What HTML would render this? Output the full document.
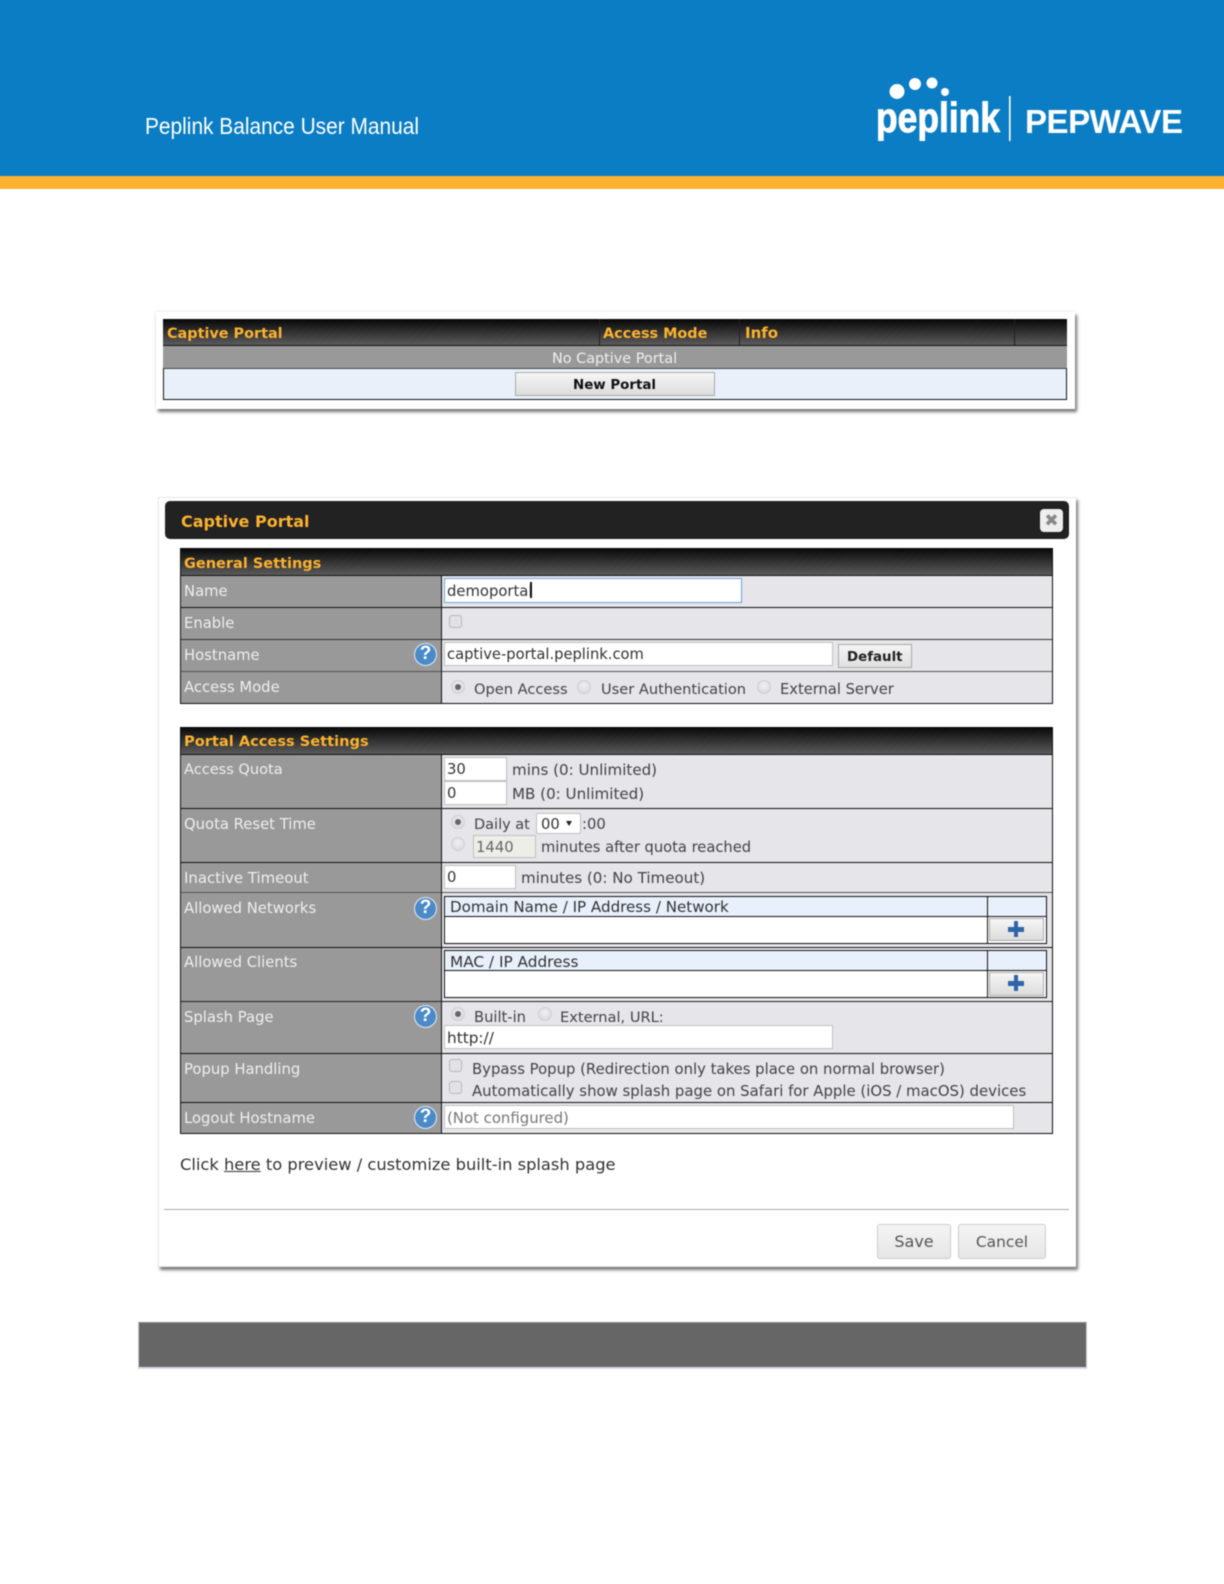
<!DOCTYPE html>
<html><head><meta charset="utf-8"><title>Peplink Balance User Manual</title>
<style>
html,body{margin:0;padding:0;background:#fff;width:1224px;height:1584px;overflow:hidden}
#p{position:relative;width:1224px;height:1584px;background:#fff;font-family:"DejaVu Sans","Liberation Sans",sans-serif;font-size:14.8px;color:#444;filter:blur(.4px)}
#p div,#p span.t{position:absolute;box-sizing:border-box}
.t{white-space:nowrap;line-height:20px;height:20px;margin-top:1px}
.v{font-size:15.1px}
.l{color:#efefef;left:184px}
.h{font-weight:bold;color:#fdb22d;font-size:14.4px}
.hd{background:repeating-linear-gradient(135deg,rgba(255,255,255,.05) 0 1px,rgba(0,0,0,.05) 1px 2px),linear-gradient(#000,#2a2a2a 45%,#5c5c5c)}
.lab{background:#999;left:180px;width:262px}
.val{background:#e5e5ea;left:442px;width:611px}
.ln{left:180px;width:873px;height:1px;background:#111}
.vl{width:1px;background:#111}
.in{background:#fff;border:1px solid #c0c0c0}
.ra{width:14px;height:14px;border-radius:50%;background:radial-gradient(circle at 50% 40%,#f0f0f2,#d4d4d8);border:1px solid #d0d0d4}
.ra.on::after{content:"";position:absolute;left:3px;top:3px;width:6px;height:6px;border-radius:50%;background:#666}
.ck{width:13px;height:13px;border-radius:3px;background:#e2e2e6;border:1px solid #b8b8bc}
.q{width:23px;height:23px;border-radius:50%;background:#4b8ac8;border:1.5px solid #e4ecf5;color:#fff;font:bold 19px/20px "Liberation Sans",sans-serif;text-align:center}
.bt{background:linear-gradient(#f6f6f6,#dcdcdc);border:1px solid #aaa}
.pl{background:#2e64a8}
.sub{background:#e8f0fb}
</style></head><body><div id="p">

<div style="left:-20px;top:-20px;width:1264px;height:196px;background:#0b7dc4"></div>
<div style="left:-20px;top:176px;width:1264px;height:13px;background:#fdb131"></div>
<svg style="position:absolute;left:0;top:0" width="1224" height="190">
<text x="145" y="134" fill="#fff" font-family="Liberation Sans" font-size="23" textLength="274" lengthAdjust="spacingAndGlyphs">Peplink Balance User Manual</text>
<circle cx="897" cy="91.5" r="7.5" fill="#fff"/><circle cx="915" cy="84" r="6" fill="#fff"/><circle cx="932" cy="83" r="5.5" fill="#fff"/><circle cx="945" cy="92" r="4" fill="#fff"/>
<text x="876" y="132" fill="#fff" stroke="#fff" stroke-width=".9" font-family="Liberation Sans" font-weight="bold" font-size="42" textLength="124" lengthAdjust="spacingAndGlyphs">peplink</text>
<rect x="1009" y="96" width="1.6" height="45" fill="#fff"/>
<text x="1025" y="133" fill="#fff" font-family="Liberation Sans" font-weight="bold" font-size="33" textLength="158" lengthAdjust="spacing">PEPWAVE</text>
</svg>

<!-- first card -->
<div style="left:156px;top:312px;width:919px;height:97px;background:#fff;box-shadow:2px 3px 3px #777,-1px -1px 3px #eee"></div>
<div class="hd" style="left:163px;top:319px;width:904px;height:27px"></div>
<div class="vl" style="left:599px;top:319px;height:27px;background:#222"></div>
<div class="vl" style="left:739px;top:319px;height:27px;background:#222"></div>
<div class="vl" style="left:1014px;top:319px;height:27px;background:#222"></div>
<div style="left:163px;top:345px;width:904px;height:1px;background:#111"></div>
<div style="left:163px;top:346px;width:904px;height:22px;background:#999"></div>
<div style="left:163px;top:368px;width:904px;height:32px;background:#e9f0fa;border:solid #111;border-width:1px;border-top-color:#444"></div>
<span class="t h" style="position:absolute;left:167px;top:323px">Captive Portal</span>
<span class="t h" style="position:absolute;left:603px;top:323px">Access Mode</span>
<span class="t h" style="position:absolute;left:745px;top:322px;font-size:15px">Info</span>
<span class="t" style="position:absolute;left:552px;top:348px;color:#f0f0f0;font-size:14.4px">No Captive Portal</span>
<div class="bt" style="left:515px;top:372px;width:200px;height:24px"></div>
<span class="t" style="position:absolute;left:573px;top:375px;font-weight:bold;color:#111;font-size:13.4px">New Portal</span>

<!-- dialog -->
<div style="left:158px;top:497px;width:918px;height:770px;background:#fff;border:1px solid #e8e8e8;border-right:0;box-shadow:2px 3px 3px #777"></div>
<div style="left:165px;top:501px;width:904px;height:38px;background:#222;border-radius:5px"></div>
<span class="t h" style="position:absolute;left:181px;top:511px;font-size:16px">Captive Portal</span>
<div style="left:1040px;top:509px;width:23px;height:23px;border-radius:4px;background:#eee"></div>
<span class="t" style="position:absolute;left:1040px;top:510px;width:23px;text-align:center;color:#888;font-weight:bold;font-size:17px">✖</span>

<!-- general -->
<div class="hd" style="left:180px;top:548px;width:873px;height:28px"></div>
<div class="lab" style="top:576px;height:127px"></div>
<div class="val" style="top:576px;height:127px"></div>
<div class="ln" style="top:575px"></div><div class="ln" style="top:607px"></div><div class="ln" style="top:639px;background:#333"></div><div class="ln" style="top:671px;background:#555"></div><div class="ln" style="top:703px"></div>
<div class="vl" style="left:180px;top:548px;height:156px"></div><div class="vl" style="left:441px;top:576px;height:127px"></div><div class="vl" style="left:1052px;top:548px;height:156px"></div>
<span class="t h" style="position:absolute;left:184px;top:553px;font-size:14.5px">General Settings</span>
<span class="t l" style="position:absolute;top:581px">Name</span>
<span class="t l" style="position:absolute;top:613px">Enable</span>
<span class="t l" style="position:absolute;top:645px">Hostname</span>
<span class="t l" style="position:absolute;top:677px">Access Mode</span>

<div class="in" style="left:444px;top:578px;width:298px;height:25px;border:1.5px solid #6fa3e0"></div>
<span class="t" style="position:absolute;left:447px;top:581px;color:#333">demoportal</span>
<div style="left:530px;top:582px;width:1.5px;height:16px;background:#111"></div>
<div class="ck" style="left:449px;top:615px"></div>
<div class="q" style="left:414px;top:643px">?</div>
<div class="in" style="left:444px;top:642px;width:389px;height:24px"></div>
<span class="t" style="position:absolute;left:447px;top:644px;color:#333;font-size:14.7px">captive-portal.peplink.com</span>
<div class="bt" style="left:838px;top:644px;width:74px;height:24px;background:linear-gradient(#f4f4f4,#e0e0e0)"></div>
<span class="t" style="position:absolute;left:847px;top:647px;font-weight:bold;color:#222;font-size:13.4px">Default</span>
<div class="ra on" style="left:451px;top:680px"></div>
<span class="t" style="position:absolute;left:474px;top:679px;font-size:14.6px">Open Access</span>
<div class="ra" style="left:577px;top:680px"></div>
<span class="t" style="position:absolute;left:601px;top:679px;font-size:14.6px">User Authentication</span>
<div class="ra" style="left:757px;top:680px"></div>
<span class="t" style="position:absolute;left:780px;top:679px;font-size:14.7px">External Server</span>

<!-- portal access -->
<div class="hd" style="left:180px;top:727px;width:873px;height:28px"></div>
<div class="lab" style="top:755px;height:378px"></div>
<div class="val" style="top:755px;height:378px"></div>
<div class="ln" style="top:754px"></div><div class="ln" style="top:808px"></div><div class="ln" style="top:862px"></div><div class="ln" style="top:892px;background:#555"></div><div class="ln" style="top:947px"></div><div class="ln" style="top:1001px;background:#222"></div><div class="ln" style="top:1053px"></div><div class="ln" style="top:1102px"></div><div class="ln" style="top:1133px"></div>
<div class="vl" style="left:180px;top:727px;height:407px"></div><div class="vl" style="left:441px;top:755px;height:378px"></div><div class="vl" style="left:1052px;top:727px;height:407px"></div>
<span class="t h" style="position:absolute;left:184px;top:731px;font-size:14.6px">Portal Access Settings</span>
<span class="t l" style="position:absolute;top:759px;font-size:14.55px">Access Quota</span>
<span class="t l" style="position:absolute;top:814px">Quota Reset Time</span>
<span class="t l" style="position:absolute;top:867px;font-size:14.9px">Inactive Timeout</span>
<span class="t l" style="position:absolute;top:898px">Allowed Networks</span>
<span class="t l" style="position:absolute;top:952px">Allowed Clients</span>
<span class="t l" style="position:absolute;top:1007px">Splash Page</span>
<span class="t l" style="position:absolute;top:1059px">Popup Handling</span>
<span class="t l" style="position:absolute;top:1108px">Logout Hostname</span>

<div class="in" style="left:444px;top:757px;width:63px;height:24px"></div>
<div class="in" style="left:444px;top:781px;width:63px;height:24px"></div>
<span class="t" style="position:absolute;left:447px;top:759px;color:#333">30</span>
<span class="t" style="position:absolute;left:447px;top:783px;color:#333">0</span>
<span class="t v" style="position:absolute;left:512px;top:759px">mins (0: Unlimited)</span>
<span class="t v" style="position:absolute;left:512px;top:783px">MB (0: Unlimited)</span>

<div class="ra on" style="left:451px;top:815px"></div>
<span class="t" style="position:absolute;left:474px;top:814px;font-size:14.5px">Daily at</span>
<div class="in" style="left:536px;top:813px;width:45px;height:21px;border-radius:2px"></div>
<span class="t" style="position:absolute;left:541px;top:814px;color:#333">00</span>
<div style="left:566px;top:821px;width:0;height:0;border:3.5px solid transparent;border-top:5px solid #222;border-bottom:0"></div>
<span class="t" style="position:absolute;left:582px;top:814px">:00</span>
<div class="ra" style="left:451px;top:837px"></div>
<div class="in" style="left:473px;top:835px;width:63px;height:23px;background:#eeeee8"></div>
<span class="t" style="position:absolute;left:476px;top:837px;color:#666">1440</span>
<span class="t" style="position:absolute;left:541px;top:837px;font-size:14.7px">minutes after quota reached</span>

<div class="in" style="left:444px;top:865px;width:72px;height:24px"></div>
<span class="t" style="position:absolute;left:447px;top:867px;color:#333">0</span>
<span class="t v" style="position:absolute;left:521px;top:867px">minutes (0: No Timeout)</span>

<div class="q" style="left:414px;top:897px">?</div>
<div style="left:444px;top:896px;width:603px;height:48px;background:#fff;border:1px solid #111"></div>
<div class="sub" style="left:445px;top:897px;width:601px;height:20px;border-bottom:1px solid #111"></div>
<div class="vl" style="left:987px;top:896px;height:48px"></div>
<span class="t v" style="position:absolute;left:450px;top:896px;color:#333">Domain Name / IP Address / Network</span>
<div class="bt" style="left:989px;top:918px;width:55px;height:23px"></div>
<div class="pl" style="left:1008px;top:927px;width:16px;height:4.5px"></div><div class="pl" style="left:1013.7px;top:921px;width:4.5px;height:16px"></div>

<div style="left:444px;top:950px;width:603px;height:48px;background:#fff;border:1px solid #111"></div>
<div class="sub" style="left:445px;top:951px;width:601px;height:20px;border-bottom:1px solid #111"></div>
<div class="vl" style="left:987px;top:950px;height:48px"></div>
<span class="t" style="position:absolute;left:450px;top:951px;color:#333;font-size:15.3px">MAC / IP Address</span>
<div class="bt" style="left:989px;top:972px;width:55px;height:24px"></div>
<div class="pl" style="left:1008px;top:981px;width:16px;height:4.5px"></div><div class="pl" style="left:1013.7px;top:975px;width:4.5px;height:16px"></div>

<div class="q" style="left:414px;top:1005px">?</div>
<div class="ra on" style="left:451px;top:1007px"></div>
<span class="t" style="position:absolute;left:474px;top:1007px;font-size:14.7px">Built-in</span>
<div class="ra" style="left:538px;top:1007px"></div>
<span class="t" style="position:absolute;left:560px;top:1007px;font-size:14.6px">External, URL:</span>
<div class="in" style="left:444px;top:1025px;width:389px;height:24px"></div>
<span class="t" style="position:absolute;left:447px;top:1027px;color:#333;font-size:15.3px">http://</span>

<div class="ck" style="left:449px;top:1059px"></div>
<span class="t" style="position:absolute;left:472px;top:1058px;font-size:14.85px">Bypass Popup (Redirection only takes place on normal browser)</span>
<div class="ck" style="left:449px;top:1081px"></div>
<span class="t" style="position:absolute;left:472px;top:1080px;font-size:14.9px">Automatically show splash page on Safari for Apple (iOS / macOS) devices</span>

<div class="q" style="left:414px;top:1106px">?</div>
<div class="in" style="left:444px;top:1105px;width:570px;height:24px"></div>
<span class="t" style="position:absolute;left:447px;top:1107px;color:#777;font-size:14.9px">(Not configured)</span>

<span class="t" style="position:absolute;left:180px;top:1154px;color:#333;font-size:16.3px">Click <u>here</u> to preview / customize built-in splash page</span>
<div style="left:164px;top:1209px;width:905px;height:1px;background:#aaa"></div>
<div style="left:877px;top:1224px;width:74px;height:35px;background:linear-gradient(#f4f4f4,#e6e6e6);border:1px solid #ccc;border-radius:3px"></div>
<span class="t" style="position:absolute;left:877px;top:1231px;width:74px;text-align:center;font-size:16px;color:#555">Save</span>
<div style="left:958px;top:1224px;width:88px;height:35px;background:linear-gradient(#f4f4f4,#e6e6e6);border:1px solid #ccc;border-radius:3px"></div>
<span class="t" style="position:absolute;left:958px;top:1231px;width:88px;text-align:center;font-size:15.4px;color:#555">Cancel</span>

<div style="left:138px;top:1322px;width:949px;height:47px;background:#666;border:1px solid #ccc;border-top-color:#888;border-bottom:2px solid #d8d8ea"></div>
</div></body></html>
